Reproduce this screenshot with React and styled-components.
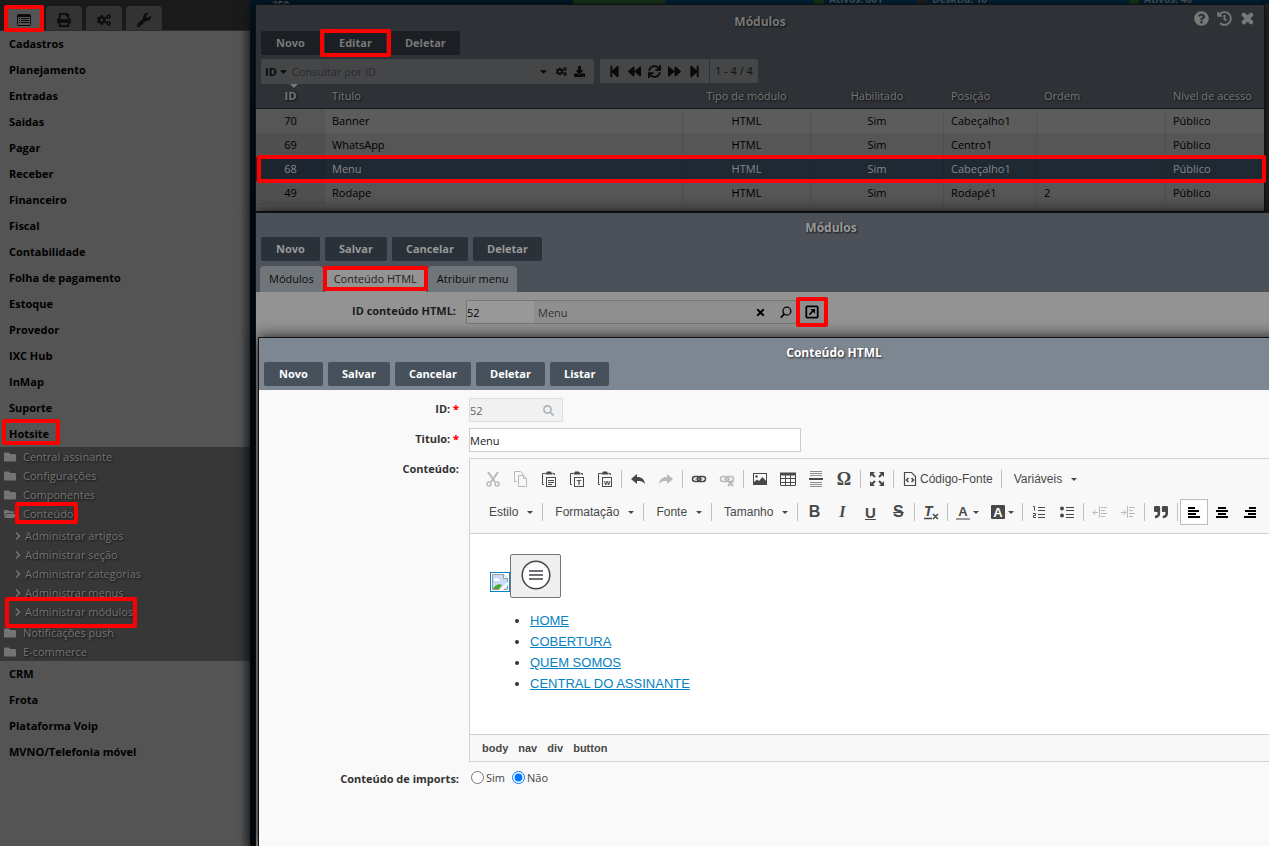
import React from 'react'
import styled, { createGlobalStyle, css } from 'styled-components'
import {
  FaPrint, FaCogs, FaWrench, FaFolder, FaFolderOpen, FaQuestionCircle, FaHistory,
  FaTimes, FaDownload, FaStepBackward, FaStepForward, FaBackward, FaForward, FaSync, FaSearch,
  FaCaretDown, FaQuoteRight,
} from 'react-icons/fa'

const GlobalStyle = createGlobalStyle`
  * { box-sizing: border-box; }
  body {
    margin: 0;
    background: #00121b;
    font-family: "Open Sans", "Noto Sans", sans-serif;
    font-size: 11px;
    color: #000;
  }
  button, input { font: inherit; color: inherit; }
  button { padding: 0; border: 0; background: none; }
`

const frame = css`
  content: '';
  position: absolute;
  z-index: 5;
  border: 4px solid #f00;
  border-radius: 2px;
  pointer-events: none;
`

// red frame drawn over the element
const marked = (inset) => css`
  position: relative;
  &::after {
    ${frame}
    inset: ${inset};
  }
`

const Page = styled.div`
  display: flex;
  min-height: 100vh;
  overflow: hidden;
`

/* ---------- sidebar ---------- */

const Sidebar = styled.aside`
  flex: 0 0 250px;
  background: linear-gradient(to right, transparent 240px, rgba(0, 0, 0, 0.35)), #545454;
`

const TabBar = styled.div`
  display: flex;
  gap: 4px;
  height: 31px;
  padding: 6px 5px 0 6px;
  background: #1a1a1a;
  border-bottom: 1px solid #2c2c2c;
`

const SideTab = styled.button`
  display: grid;
  place-items: center;
  width: 36px;
  padding-top: 4px;
  border-radius: 4px 4px 0 0;
  background: ${(p) => (p.$active ? '#545454' : '#333')};
  font-size: 14px;
  color: #0c0c0c;
  ${(p) => p.$active && marked('-1px -2px -2px')}
`

const Menu = styled.ul`
  margin: 0;
  padding: 0;
  list-style: none;
`

const MenuLink = styled.a`
  display: flex;
  align-items: center;
  height: 26px;
  padding: 0 0 2px 9px;
  font-weight: 700;
  color: #000;
  text-decoration: none;
  span { ${(p) => p.$marked && marked('-7px -11px -4px -7px')} }
`

const SubMenu = styled(Menu)`
  background: linear-gradient(to right, transparent 240px, rgba(0, 0, 0, 0.35)), #373737;
`

const SubSubMenu = styled(Menu)`
  padding: 3px 0 2px 14px;
`

const SubLink = styled.a`
  display: flex;
  align-items: center;
  gap: ${(p) => (p.$leaf ? '3px' : '7px')};
  height: 19px;
  padding-left: ${(p) => (p.$leaf ? '0' : '4px')};
  color: #747474;
  text-decoration: none;
  text-shadow: 1px 1px 2px #111;
  svg { flex: none; width: ${(p) => (p.$leaf ? '8px' : '12px')}; height: 12px; }
  span { ${(p) => p.$marked && marked(p.$leaf ? '-7px -4px -9px -20px' : '-4px -5px -3px -8px')} }
`

/* ---------- windows ---------- */

const Desktop = styled.main`
  flex: 1;
  min-width: 0;
  display: flex;
  flex-direction: column;
  padding-left: 5px;
  background: linear-gradient(to right, transparent calc(100% - 6px), #292929 calc(100% - 5px)), linear-gradient(#001a2a, #000d14 220px);
`

const Backdrop = styled.div`
  display: flex;
  height: 4px;
  overflow: hidden;
  background: #001e30;
  font-size: 10px;
  font-weight: 700;
  line-height: 10px;
  color: #5d6468;
`

const AxisLabel = styled.span`
  width: 302px;
  padding-left: 17px;
`

const Bar = styled.i`
  height: 4px;
  width: ${(p) => p.$w}px;
  background: ${(p) => p.$c};
`

const Legend = styled.span`
  display: flex;
  align-items: flex-end;
  gap: 5px;
  width: ${(p) => p.$w}px;
  background: #002a45;
`

const Win = styled.section`
  position: relative;
  border: 1px solid #111;
  box-shadow: 0 0 14px rgba(0, 0, 0, 0.85);
`

const ListWin = styled(Win)`
  margin-right: 4px;
  background: #585858;
  padding-bottom: 6px;
`

const EditWin = styled(Win)`
  flex: 1;
  display: flex;
  flex-direction: column;
  width: calc(100% + 138px);
  border-bottom: 0;
  background: #939393;
`

const HtmlWin = styled(Win)`
  flex: 1;
  width: calc(100% + 2px);
  margin-left: 2px;
  border-bottom: 0;
  background: #f9f9f9;
`

const tones = {
  dark: { head: '#2e3136', button: '#1b1f23', text: '#787878' },
  mid: { head: '#4c5058', button: '#2a3138', text: '#999' },
  light: { head: '#7d8791', button: '#46515c', text: '#fff' },
}

const Head = styled.header`
  background: ${(p) => tones[p.$tone].head};
  color: ${(p) => tones[p.$tone].text};
`

const TitleBar = styled.div`
  display: grid;
  grid-template-columns: 1fr auto 1fr;
  align-items: center;
  height: ${(p) => p.$h}px;
  padding: 6px 9px 0;
  h2 {
    grid-column: 2;
    margin: 0;
    font-size: 12px;
    line-height: 16px;
    text-shadow: 1px 1px 2px rgba(0, 0, 0, 0.7);
  }
`

const TitleTools = styled.div`
  display: flex;
  justify-content: flex-end;
  gap: 8px;
  padding-bottom: 6px;
  font-size: 15px;
  button { display: flex; }
`

const Actions = styled.div`
  display: flex;
  gap: 5px;
  padding: 0 5px ${(p) => p.$bottom || 4}px;
`

const Action = styled.button`
  min-width: 59px;
  height: 24px;
  padding: 0 14px 1px;
  border-radius: 2px;
  background: ${(p) => tones[p.$tone].button};
  font-weight: 700;
  ${(p) => p.$marked && marked('-2px -5px')}
`

const Filters = styled.div`
  display: flex;
  gap: 6px;
  padding: 0 5px;
  color: #080808;
`

const SearchBox = styled.div`
  display: flex;
  align-items: center;
  gap: 3px;
  width: 333px;
  height: 25px;
  padding: 0 9px 1px 4px;
  border-radius: 2px;
  background: #444648;
  button { display: flex; align-items: center; gap: 1px; }
  svg { font-size: 11px; }
  input {
    flex: 1;
    min-width: 0;
    padding: 0;
    border: 0;
    background: none;
    outline: 0;
  }
  input::placeholder { color: #2a2b2c; }
`

const SearchIcons = styled.span`
  display: flex;
  gap: 7px;
`

const Pager = styled.div`
  display: flex;
  height: 24px;
  border-radius: 2px;
  background: #444648;
`

const PagerButtons = styled.div`
  display: flex;
  align-items: center;
  gap: 7px;
  padding: 0 8px;
  border-right: 1px solid #2e3136;
  font-size: 13px;
  button { display: flex; }
`

const PagerText = styled.span`
  padding: 0 5px;
  line-height: 24px;
  color: #111;
`

const Grid = styled.table`
  width: 100%;
  table-layout: fixed;
  border-spacing: 0;
`

const HeadRow = styled.tr`
  height: 25px;
  background: #2e3136;
`

const Row = styled.tr`
  position: relative;
  height: 24px;
  background: ${(p) => (p.$selected ? '#1f2933' : p.$odd ? '#565656' : '#5c5c5c')};
  color: ${(p) => (p.$selected ? '#858585' : '#000')};
  ${(p) => p.$selected && css`
    td:first-child::after {
      ${frame}
      inset: -2px -2px -2px 1px;
    }
  `}
`

const cell = css`
  padding: 0 0 1px ${(p) => (p.$center ? '0' : '7px')};
  text-align: ${(p) => (p.$center ? 'center' : 'left')};
  white-space: nowrap;
`

const Th = styled.th`
  ${cell}
  position: relative;
  border-bottom: 1px solid #15181b;
  border-left: 1px solid transparent;
  font-weight: ${(p) => (p.$sorted ? 700 : 400)};
  color: #777;
  text-shadow: 1px 1px 2px #111;
  ${(p) => p.$sorted && css`
    &::before {
      content: '';
      position: absolute;
      top: 0;
      left: 33px;
      border: 4px solid transparent;
      border-top-color: #777;
      border-bottom: 0;
    }
  `}
`

const Td = styled.td`
  ${cell}
  border-left: 1px solid rgba(0, 0, 0, 0.1);
  &:first-child { border-left-color: transparent; background: rgba(0, 0, 0, 0.06); }
`

const Tabs = styled.div`
  display: flex;
  gap: 2px;
  padding: 0 4px;
`

const Tab = styled.button`
  height: 26px;
  padding: 0 9px 1px;
  border-radius: 4px 4px 0 0;
  background: ${(p) => (p.$active ? '#939393' : '#70757a')};
  color: ${(p) => (p.$active ? '#222' : '#0c0c0c')};
  ${(p) => p.$active && marked('0 -2px 1px')}
`

const Field = styled.div`
  display: grid;
  grid-template-columns: 200px 1fr;
  column-gap: 10px;
`

const LookupField = styled(Field)`
  padding: 8px 0 13px;
`

const Label = styled.label`
  font-weight: 700;
  line-height: 22px;
  text-align: right;
  color: ${(p) => (p.$dark ? '#1c1c1c' : '#333')};
  b { color: #f00; }
`

const Lookup = styled.div`
  display: flex;
  align-items: center;
  width: 359px;
  height: 24px;
  border: 1px solid #777;
  border-right: 0;
  background: #8f8f8f;
  input {
    height: 22px;
    padding: 0;
    border: 0;
    background: #999;
    outline: 0;
  }
  input:first-child { width: 67px; color: #000; }
  input:nth-child(2) { flex: 1; min-width: 0; padding-left: 4px; background: none; color: #333; }
`

const LookupButton = styled.button`
  display: grid;
  place-items: center;
  width: 26px;
  height: 22px;
  ${(p) => p.$marked && marked('-4px -3px')}
`

const Form = styled.div`
  display: flex;
  flex-direction: column;
  gap: 6px;
  padding-top: 8px;
`

const IdBox = styled.div`
  display: flex;
  align-items: center;
  width: 94px;
  height: 24px;
  padding-right: 8px;
  border: 1px solid #ddd;
  background: #f1f1f1;
  color: #666;
  input { flex: 1; min-width: 0; padding: 0; border: 0; background: none; outline: 0; }
  svg { color: #aeb6bd; }
`

const TextInput = styled.input`
  width: 332px;
  height: 24px;
  padding: 0;
  border: 1px solid #ccc;
  background: #fff;
  color: #222;
`

/* ---------- rich text editor ---------- */

const Editor = styled.div`
  border: 1px solid #d1d1d1;
  font-family: "Liberation Sans", Arial, sans-serif;
  font-size: 12px;
  color: #484848;
`

const Toolbar = styled.div`
  display: flex;
  flex-direction: column;
  gap: 7px;
  padding: 7px 9px 8px;
  background: #f8f8f8;
  border-bottom: 1px solid #d1d1d1;
`

const ToolRow = styled.div`
  display: flex;
  align-items: center;
  height: 26px;
`

const Tool = styled.button`
  flex: none;
  display: flex;
  align-items: center;
  justify-content: center;
  gap: 2px;
  height: 26px;
  min-width: 28px;
  padding: 0 6px;
  color: #484848;
  opacity: ${(p) => (p.$off ? 0.35 : 1)};
  ${(p) => p.$on && css`
    background: #fff;
    border: 1px solid #bcbcbc;
    padding: 0 5px;
  `}
`

const ColorTool = styled(Tool)`
  padding-left: 5px;
`

const Combo = styled(Tool)`
  gap: 9px;
  padding: 0 7px 0 10px;
`

const Sep = styled.i`
  flex: none;
  width: 1px;
  height: 18px;
  margin: 0 2px;
  background: #c0c0c0;
`

const Letter = styled.span`
  font: ${(p) => p.$font || '700 16px "Liberation Sans", sans-serif'};
  text-decoration: ${(p) => p.$line || 'none'};
`

const Content = styled.div`
  height: 200px;
  padding: 20px;
  background: #fff;
  font-size: 13px;
  line-height: 21px;
  color: #333;
  ul { margin: 12px 0 0; padding-left: 40px; }
  a { color: #0782c1; }
`

const Media = styled.div`
  display: flex;
  align-items: flex-end;
`

const MissingImage = styled.a`
  display: flex;
  margin-bottom: 6px;
  border: 1px solid #0782c1;
`

const NavToggle = styled.button`
  display: grid;
  place-items: center;
  width: 51px;
  height: 44px;
  padding-bottom: 3px;
  border: 1px solid #767676;
  border-radius: 2px;
  background: #efefef;
`

const PathBar = styled.div`
  display: flex;
  gap: 10px;
  padding: 0 12px;
  border-top: 1px solid #d1d1d1;
  background: #f8f8f8;
  font-size: 11px;
  font-weight: 700;
  line-height: 26px;
`

const Radios = styled.div`
  display: flex;
  align-items: center;
  gap: 7px;
  height: 19px;
  padding-left: 2px;
  color: #444;
  label { display: flex; align-items: center; gap: 2px; }
  input { width: 13px; height: 13px; margin: 0; }
`

/* ---------- icons ---------- */

const Icon = ({ children, size = 16 }) => (
  <svg width={size} height={size} viewBox="0 0 16 16" fill="none" stroke="currentColor" aria-hidden="true">{children}</svg>
)

const ListIcon = () => (
  <Icon>
    <rect x="1.5" y="2.5" width="13" height="11" rx="1" />
    <path d="M1 4h14" strokeWidth="2" />
    <path d="M3 6.5h1m1 0h8M3 8.5h1m1 0h8M3 10.5h1m1 0h8" />
  </Icon>
)

const Chevron = () => (
  <svg width="8" height="12" viewBox="0 0 8 12" fill="none" stroke="currentColor" aria-hidden="true">
    <path d="M2 2.500L5.500 6 2 9.500" strokeWidth="1.500" />
  </svg>
)

const Cut = () => (
  <Icon>
    <path d="M3 1l7 10M13 1L6 11" strokeWidth="2" />
    <circle cx="4" cy="13" r="2" strokeWidth="1.5" />
    <circle cx="12" cy="13" r="2" strokeWidth="1.5" />
  </Icon>
)

const Copy = () => (
  <Icon>
    <path d="M4 10.500H1.500v-10h6L10 3v1M5.500 4.500h5l3 3v8h-8zM10.500 4.500v3h3" />
  </Icon>
)

const Clipboard = ({ children }) => (
  <Icon>
    <path d="M3 13.500H1.500v-11H4M12 2.500h1.500V4" />
    <path d="M4.500 2.500h7M6 1.500h4" strokeWidth="2" />
    <rect x="5.500" y="6.500" width="9" height="9" />
    {children}
  </Icon>
)

const ClipLetter = ({ children }) => (
  <text x="10" y="14" textAnchor="middle" fontSize="8" fontWeight="700" fontFamily="Liberation Sans" fill="currentColor" stroke="none">{children}</text>
)

const Undo = () => (
  <Icon><path d="M1 8l6-5v3c5 0 7.500 2.500 8 7-2-2.500-4-3-8-3v3z" fill="currentColor" stroke="none" /></Icon>
)

const Redo = () => (
  <Icon><path d="M15 8L9 3v3c-5 0-7.500 2.500-8 7 2-2.500 4-3 8-3v3z" fill="currentColor" stroke="none" /></Icon>
)

const Link = ({ broken }) => (
  <Icon>
    <rect x="1.500" y="5.500" width="8" height="5" rx="2.500" strokeWidth="1.500" />
    <rect x="6.500" y="5.500" width="8" height="5" rx="2.500" strokeWidth="1.500" />
    <path d="M4.500 8h7" />
    {broken && <path d="M9 10l5 5M14 10l-5 5" strokeWidth="2" />}
  </Icon>
)

const Picture = () => (
  <Icon>
    <rect x="1.500" y="2.500" width="13" height="11" />
    <path d="M2 13v-2l3-2.500 2 1.500 3.500-4L14 10v3z" fill="currentColor" stroke="none" />
    <circle cx="4.500" cy="5.500" r="1.200" fill="currentColor" stroke="none" />
  </Icon>
)

const TableIcon = () => (
  <Icon>
    <path d="M0 3h16" strokeWidth="3" />
    <path d="M.5 2v12.500h15V2M0 7.500h16M0 11.500h16M5.500 4v10M10.500 4v10" />
  </Icon>
)

const Rule = () => (
  <Icon>
    <path d="M2 .5h12M2 2.500h12M2 4.500h12M2 11.500h12M2 13.500h12M2 15.500h12" strokeOpacity=".6" />
    <path d="M1 8h14" strokeWidth="2" />
  </Icon>
)

const Maximize = () => (
  <Icon>
    <path d="M2 2l4 4M14 2l-4 4M2 14l4-4M14 14l-4-4" strokeWidth="2" />
    <path d="M1 1h5L1 6zM15 1v5l-5-5zM1 15v-5l5 5zM15 15h-5l5-5z" fill="currentColor" stroke="none" />
  </Icon>
)

const Source = () => (
  <Icon>
    <path d="M2.500 1.500h7l4 4v9h-11z" strokeWidth="1.200" />
    <path d="M6.500 7L4.500 9l2 2M9.500 7l2 2-2 2" strokeWidth="1.500" />
  </Icon>
)

const Numbered = () => (
  <Icon>
    <path d="M2 2.500h1.500v4M2 9.500h2.500v2H2.500v2h2.500" />
    <path d="M7 3.500h7M7 6.500h7M7 10.500h7M7 13.500h7" />
  </Icon>
)

const Bulleted = () => (
  <Icon>
    <circle cx="3" cy="4.500" r="2" fill="currentColor" stroke="none" />
    <circle cx="3" cy="11.500" r="2" fill="currentColor" stroke="none" />
    <path d="M7 3.500h8M7 6.500h8M7 10.500h8M7 13.500h8" />
  </Icon>
)

const Indent = ({ out }) => (
  <Icon>
    <path d="M7.500 2v12M9 3.500h6M9 6.500h4M9 9.500h6M9 12.500h4M1 8.500h5" />
    <path d={out ? 'M3.500 6L1 8.500 3.500 11' : 'M3.500 6L6 8.500 3.500 11'} />
  </Icon>
)

const alignPaths = {
  left: 'M2 4h7M2 7h11M2 10h8M2 13h12',
  center: 'M4 4h8M2 7h12M4 10h8M2 13h12',
  right: 'M7 4h7M3 7h11M6 10h8M2 13h12',
}

const Align = ({ to }) => (
  <Icon><path d={alignPaths[to]} stroke="#000" strokeWidth="2" /></Icon>
)

const ColorA = ({ filled }) => (
  <Icon>
    {filled && <rect x="1" y="1" width="14" height="14" rx="1" fill="currentColor" stroke="none" />}
    <text x="8" y={filled ? 13 : 12} textAnchor="middle" fontSize="13" fontWeight="700" fontFamily="Liberation Sans" stroke="none" fill={filled ? '#fff' : 'currentColor'}>A</text>
    {!filled && <path d="M1 15h14" stroke="#999" strokeWidth="2" />}
  </Icon>
)

const Glass = () => (
  <Icon size={14}>
    <circle cx="9" cy="7" r="4.500" strokeWidth="1.500" />
    <path d="M6 10.500L2 14.500" strokeWidth="2" />
  </Icon>
)

const OpenIcon = () => (
  <Icon size={14}>
    <rect x="1.500" y="1.500" width="13" height="13" rx="1" strokeWidth="2" />
    <path d="M5 11l5-5" strokeWidth="2" />
    <path d="M6 4.500h5.500V10z" fill="currentColor" stroke="none" />
  </Icon>
)

const BrokenImage = () => (
  <svg width="18" height="18" viewBox="0 0 18 18" aria-hidden="true">
    <path d="M1.500 1.500h11l4 4v11h-15z" fill="#c9dcf6" stroke="#999" />
    <path d="M12.500 1.500v4h4" fill="#fff" stroke="#999" />
    <path d="M3 7c0-2 3-3 4-1 2 0 2 2 1 2H4z" fill="#fff" />
    <path d="M2 16c2-4 6-6 9-4l-3 4z" fill="#4ca832" />
    <path d="M8 17l9-8v3l-5 5z" fill="#fff" />
  </svg>
)

const Burger = () => (
  <svg width="30" height="30" viewBox="0 0 30 30" fill="none" stroke="#40464d" aria-hidden="true">
    <circle cx="15" cy="15" r="13.800" fill="#fff" strokeWidth="1.500" />
    <path d="M8 11h14M8 15h14M8 19h14" strokeWidth="1.500" />
  </svg>
)

const Drop = () => (
  <svg width="6" height="3" viewBox="0 0 6 3" aria-hidden="true"><path d="M0 0h6L3 3z" fill="currentColor" /></svg>
)

/* ---------- data ---------- */

const menuTop = [
  'Cadastros', 'Planejamento', 'Entradas', 'Saidas', 'Pagar', 'Receber', 'Financeiro', 'Fiscal',
  'Contabilidade', 'Folha de pagamento', 'Estoque', 'Provedor', 'IXC Hub', 'InMap', 'Suporte',
]
const menuBottom = ['CRM', 'Frota', 'Plataforma Voip', 'MVNO/Telefonia móvel']
const contentMenu = ['artigos', 'seção', 'categorias', 'menus', 'módulos']

const columns = [
  { label: 'ID', width: '68px', center: true },
  { label: 'Título', width: 'auto' },
  { label: 'Tipo de módulo', width: '128px', center: true },
  { label: 'Habilitado', width: '133px', center: true },
  { label: 'Posição', width: '93px' },
  { label: 'Ordem', width: '129px' },
  { label: 'Nível de acesso', width: '99px' },
]

const modules = [
  ['70', 'Banner', 'HTML', 'Sim', 'Cabeçalho1', '', 'Público'],
  ['69', 'WhatsApp', 'HTML', 'Sim', 'Centro1', '', 'Público'],
  ['68', 'Menu', 'HTML', 'Sim', 'Cabeçalho1', '', 'Público'],
  ['49', 'Rodape', 'HTML', 'Sim', 'Rodapé1', '2', 'Público'],
]

const Folder = ({ label, open }) => (
  <li>
    <SubLink href="#" $marked={open}>
      {open ? <FaFolderOpen /> : <FaFolder />}
      <span>{label}</span>
    </SubLink>
    {open && (
      <SubSubMenu>
        {contentMenu.map((name) => (
          <li key={name}>
            <SubLink href="#" $leaf $marked={name === 'módulos'}>
              <Chevron />
              <span>Administrar {name}</span>
            </SubLink>
          </li>
        ))}
      </SubSubMenu>
    )}
  </li>
)

function SideMenu() {
  return (
    <Sidebar>
      <TabBar>
        <SideTab $active aria-label="Menu"><ListIcon /></SideTab>
        <SideTab aria-label="Imprimir"><FaPrint /></SideTab>
        <SideTab aria-label="Configurações"><FaCogs /></SideTab>
        <SideTab aria-label="Ferramentas"><FaWrench /></SideTab>
      </TabBar>
      <Menu>
        {menuTop.map((item) => <li key={item}><MenuLink href="#">{item}</MenuLink></li>)}
        <li>
          <MenuLink href="#" $marked><span>Hotsite</span></MenuLink>
          <SubMenu>
            <Folder label="Central assinante" />
            <Folder label="Configurações" />
            <Folder label="Componentes" />
            <Folder label="Conteúdo" open />
            <Folder label="Notificações push" />
            <Folder label="E-commerce" />
          </SubMenu>
        </li>
        {menuBottom.map((item) => <li key={item}><MenuLink href="#">{item}</MenuLink></li>)}
      </Menu>
    </Sidebar>
  )
}

// sliver of the dashboard that stays visible above the windows
function Dashboard() {
  return (
    <Backdrop>
      <AxisLabel>250</AxisLabel>
      <Bar $w={16} $c="#001e30" />
      <Bar $w={92} $c="#1b401c" />
      <Bar $w={149} $c="#002a45" />
      <Legend $w={103}><Bar $w={10} $c="#1b401c" />Ativos: 801</Legend>
      <Legend $w={212}><Bar $w={10} $c="#262626" />Desktid: 10</Legend>
      <Legend $w={130}><Bar $w={10} $c="#1b401c" />Ativos: 40</Legend>
    </Backdrop>
  )
}

function ModuleList() {
  return (
    <ListWin>
      <Head $tone="dark">
        <TitleBar $h={26}>
          <h2>Módulos</h2>
          <TitleTools>
            <button aria-label="Ajuda"><FaQuestionCircle /></button>
            <button aria-label="Histórico"><FaHistory /></button>
            <button aria-label="Fechar"><FaTimes strokeWidth={50} stroke="currentColor" /></button>
          </TitleTools>
        </TitleBar>
        <Actions>
          <Action $tone="dark">Novo</Action>
          <Action $tone="dark" $marked>Editar</Action>
          <Action $tone="dark">Deletar</Action>
        </Actions>
        <Filters>
          <SearchBox>
            <button><b>ID</b><FaCaretDown /></button>
            <input aria-label="Consultar por ID" placeholder="Consultar por ID" />
            <SearchIcons>
              <button aria-label="Opções"><FaCaretDown /></button>
              <button aria-label="Configurar"><FaCogs /></button>
              <button aria-label="Baixar"><FaDownload /></button>
            </SearchIcons>
          </SearchBox>
          <Pager>
            <PagerButtons>
              <button aria-label="Primeira"><FaStepBackward /></button>
              <button aria-label="Anterior"><FaBackward /></button>
              <button aria-label="Atualizar"><FaSync /></button>
              <button aria-label="Próxima"><FaForward /></button>
              <button aria-label="Última"><FaStepForward /></button>
            </PagerButtons>
            <PagerText>1 - 4 / 4</PagerText>
          </Pager>
        </Filters>
      </Head>
      <Grid>
        <colgroup>
          {columns.map((c) => <col key={c.label} style={{ width: c.width }} />)}
        </colgroup>
        <thead>
          <HeadRow>
            {columns.map((c, i) => <Th key={c.label} $center={c.center} $sorted={i === 0}>{c.label}</Th>)}
          </HeadRow>
        </thead>
        <tbody>
          {modules.map((row, r) => (
            <Row key={row[0]} $odd={r % 2 === 1} $selected={row[0] === '68'}>
              {row.map((value, i) => <Td key={columns[i].label} $center={columns[i].center}>{value}</Td>)}
            </Row>
          ))}
        </tbody>
      </Grid>
    </ListWin>
  )
}

function HtmlEditor() {
  return (
    <Editor>
      <Toolbar>
        <ToolRow>
          <Tool $off aria-label="Recortar"><Cut /></Tool>
          <Tool $off aria-label="Copiar"><Copy /></Tool>
          <Tool aria-label="Colar"><Clipboard><path d="M7 9.500h6M7 11.500h6M7 13.500h4" /></Clipboard></Tool>
          <Tool aria-label="Colar como texto"><Clipboard><ClipLetter>T</ClipLetter></Clipboard></Tool>
          <Tool aria-label="Colar do Word"><Clipboard><ClipLetter>w</ClipLetter></Clipboard></Tool>
          <Sep />
          <Tool aria-label="Desfazer"><Undo /></Tool>
          <Tool $off aria-label="Refazer"><Redo /></Tool>
          <Sep />
          <Tool aria-label="Link"><Link /></Tool>
          <Tool $off aria-label="Remover link"><Link broken /></Tool>
          <Sep />
          <Tool aria-label="Imagem"><Picture /></Tool>
          <Tool aria-label="Tabela"><TableIcon /></Tool>
          <Tool aria-label="Linha horizontal"><Rule /></Tool>
          <Tool aria-label="Caractere especial"><Letter $font={'700 18px "Liberation Serif", serif'}>Ω</Letter></Tool>
          <Sep />
          <Tool aria-label="Maximizar"><Maximize /></Tool>
          <Sep />
          <Tool><Source />Código-Fonte</Tool>
          <Sep />
          <Combo>Variáveis <Drop /></Combo>
        </ToolRow>
        <ToolRow>
          {['Estilo', 'Formatação', 'Fonte', 'Tamanho'].map((name) => (
            <React.Fragment key={name}>
              <Combo>{name} <Drop /></Combo>
              <Sep />
            </React.Fragment>
          ))}
          <Tool aria-label="Negrito"><Letter>B</Letter></Tool>
          <Tool aria-label="Itálico"><Letter $font={'italic 700 16px "Liberation Serif", serif'}>I</Letter></Tool>
          <Tool aria-label="Sublinhado"><Letter $font={'700 15px "Liberation Sans", sans-serif'} $line="underline">U</Letter></Tool>
          <Tool aria-label="Tachado"><Letter $line="line-through">S</Letter></Tool>
          <Sep />
          <Tool aria-label="Remover formatação">
            <Icon>
              <text x="1" y="12" fontSize="14" fontStyle="italic" fontWeight="700" fontFamily="Liberation Sans" fill="currentColor" stroke="none">T</text>
              <path d="M1 14.500h8M10 10l5 5M15 10l-5 5" strokeWidth="1.500" />
            </Icon>
          </Tool>
          <Sep />
          <ColorTool aria-label="Cor do texto"><ColorA /><Drop /></ColorTool>
          <ColorTool aria-label="Cor do fundo"><ColorA filled /><Drop /></ColorTool>
          <Sep />
          <Tool aria-label="Lista numerada"><Numbered /></Tool>
          <Tool aria-label="Lista"><Bulleted /></Tool>
          <Sep />
          <Tool $off aria-label="Diminuir recuo"><Indent out /></Tool>
          <Tool $off aria-label="Aumentar recuo"><Indent /></Tool>
          <Sep />
          <Tool aria-label="Citação"><FaQuoteRight size={14} /></Tool>
          <Sep />
          <Tool $on aria-label="Alinhar à esquerda"><Align to="left" /></Tool>
          <Tool aria-label="Centralizar"><Align to="center" /></Tool>
          <Tool aria-label="Alinhar à direita"><Align to="right" /></Tool>
        </ToolRow>
      </Toolbar>
      <Content>
        <Media>
          <MissingImage href="#" aria-label="Imagem"><BrokenImage /></MissingImage>
          <NavToggle aria-label="Abrir menu"><Burger /></NavToggle>
        </Media>
        <ul>
          <li><a href="#">HOME</a></li>
          <li><a href="#">COBERTURA</a></li>
          <li><a href="#">QUEM SOMOS</a></li>
          <li><a href="#">CENTRAL DO ASSINANTE</a></li>
        </ul>
      </Content>
      <PathBar>
        <span>body</span><span>nav</span><span>div</span><span>button</span>
      </PathBar>
    </Editor>
  )
}

function HtmlWindow() {
  return (
    <HtmlWin>
      <Head $tone="light">
        <TitleBar $h={24}><h2>Conteúdo HTML</h2></TitleBar>
        <Actions>
          {['Novo', 'Salvar', 'Cancelar', 'Deletar', 'Listar'].map((name) => (
            <Action key={name} $tone="light">{name}</Action>
          ))}
        </Actions>
      </Head>
      <Form>
        <Field>
          <Label htmlFor="id">ID: <b>*</b></Label>
          <IdBox><input id="id" defaultValue="52" readOnly /><FaSearch /></IdBox>
        </Field>
        <Field>
          <Label htmlFor="titulo">Titulo: <b>*</b></Label>
          <TextInput id="titulo" defaultValue="Menu" />
        </Field>
        <Field>
          <Label as="span">Conteúdo:</Label>
          <HtmlEditor />
        </Field>
        <Field>
          <Label as="span">Conteúdo de imports:</Label>
          <Radios>
            <label><input type="radio" name="imports" />Sim</label>
            <label><input type="radio" name="imports" defaultChecked />Não</label>
          </Radios>
        </Field>
      </Form>
    </HtmlWin>
  )
}

function ModuleForm() {
  return (
    <EditWin>
      <Head $tone="mid">
        <TitleBar $h={24}><h2>Módulos</h2></TitleBar>
        <Actions $bottom={5}>
          {['Novo', 'Salvar', 'Cancelar', 'Deletar'].map((name) => (
            <Action key={name} $tone="mid">{name}</Action>
          ))}
        </Actions>
        <Tabs>
          <Tab>Módulos</Tab>
          <Tab $active>Conteúdo HTML</Tab>
          <Tab>Atribuir menu</Tab>
        </Tabs>
      </Head>
      <LookupField>
        <Label htmlFor="conteudo" $dark>ID conteúdo HTML:</Label>
        <Lookup>
          <input id="conteudo" defaultValue="52" />
          <input aria-label="Conteúdo" defaultValue="Menu" readOnly />
          <LookupButton aria-label="Limpar"><FaTimes /></LookupButton>
          <LookupButton aria-label="Buscar"><Glass /></LookupButton>
          <LookupButton aria-label="Abrir" $marked><OpenIcon /></LookupButton>
        </Lookup>
      </LookupField>
      <HtmlWindow />
    </EditWin>
  )
}

function App() {
  return (
    <>
      <GlobalStyle />
      <Page>
        <SideMenu />
        <Desktop>
          <Dashboard />
          <ModuleList />
          <ModuleForm />
        </Desktop>
      </Page>
    </>
  )
}

export default App
